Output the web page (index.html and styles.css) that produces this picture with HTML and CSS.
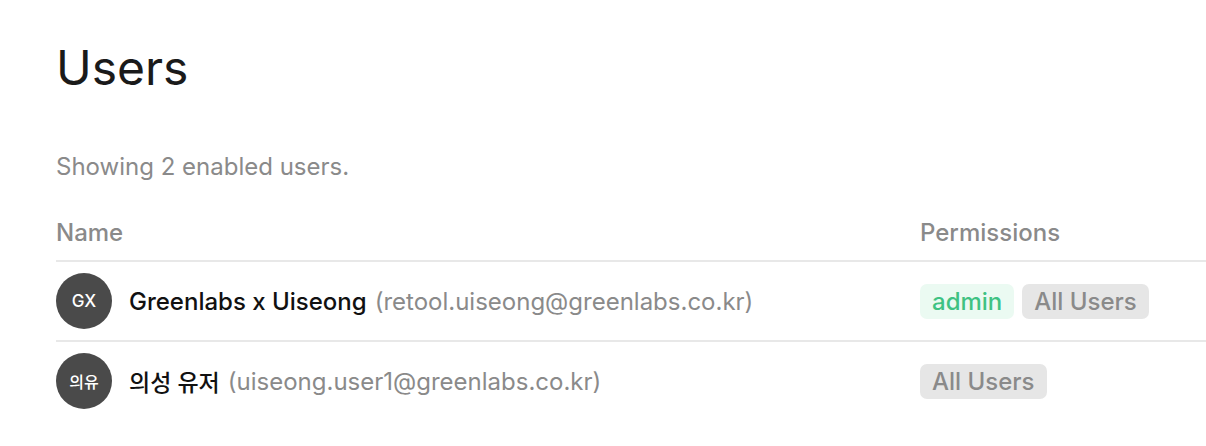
FILE: index.html
```html
<!DOCTYPE html>
<html lang="ko">
<head>
    <meta charset="UTF-8">
    <title>Users</title>
    <link rel="stylesheet" href="styles.css">
</head>
<body>
    <main class="page">
        <h1 class="title">Users</h1>
        <p class="summary">Showing 2 enabled users.</p>

        <div class="table">
            <div class="row head">
                <div class="cell-name">Name</div>
                <div class="cell-perm">Permissions</div>
            </div>
            <div class="row">
                <div class="cell-name">
                    <span class="avatar">GX</span>
                    <span class="user-name">Greenlabs x Uiseong</span>
                    <span class="user-mail">(retool.uiseong@greenlabs.co.kr)</span>
                </div>
                <div class="cell-perm">
                    <span class="tag tag-admin">admin</span>
                    <span class="tag">All Users</span>
                </div>
            </div>
            <div class="row">
                <div class="cell-name">
                    <span class="avatar avatar-ko">의유</span>
                    <span class="user-name name-ko">의성 유저</span>
                    <span class="user-mail">(uiseong.user1@greenlabs.co.kr)</span>
                </div>
                <div class="cell-perm">
                    <span class="tag">All Users</span>
                </div>
            </div>
        </div>
    </main>
</body>
</html>
```

FILE: styles.css
```css
body {
    margin: 0;
    padding: 0;
    background: #fff;
    font-family: 'Inter', 'Noto Sans CJK KR', sans-serif;
    color: #1a1a1a;
}
.page {
    padding: 36px 0 0 56px;
}
.title {
    margin: 0;
    font-size: 48px;
    font-weight: 400;
    line-height: 64px;
}
.summary {
    margin: 52px 0 0;
    font-size: 24px;
    line-height: 30px;
    color: #8a8a8a;
}
.table {
    margin-top: 30px;
}
.row {
    box-sizing: border-box;
    display: flex;
    align-items: center;
    height: 80px;
    border-top: 2px solid #e8e8e8;
}
.row.head {
    height: 48px;
    padding-bottom: 12px;
    border-top: none;
    align-items: flex-end;
    font-size: 24px;
    line-height: 30px;
    font-weight: 500;
    color: #8a8a8a;
}
.cell-name {
    width: 864px;
    display: flex;
    align-items: center;
    font-size: 24px;
}
.cell-perm {
    display: flex;
    gap: 8px;
}
.avatar {
    width: 56px;
    height: 56px;
    border-radius: 50%;
    background: #4a4a4a;
    color: #fff;
    font-size: 17px;
    font-weight: 500;
    display: flex;
    align-items: center;
    justify-content: center;
    margin-right: 17px;
}
.avatar-ko {
    font-size: 16px;
}
.user-name {
    font-weight: 500;
    color: #111;
    margin-right: 8px;
}
.name-ko {
    font-size: 23px;
}
.user-mail {
    color: #8a8a8a;
}
.tag {
    font-size: 24px;
    font-weight: 500;
    line-height: 35px;
    padding: 0 12px;
    border-radius: 7px;
    background: #e6e6e6;
    color: #8a8a8a;
}
.tag-admin {
    background: #ebfaf2;
    color: #3fc283;
}
```
